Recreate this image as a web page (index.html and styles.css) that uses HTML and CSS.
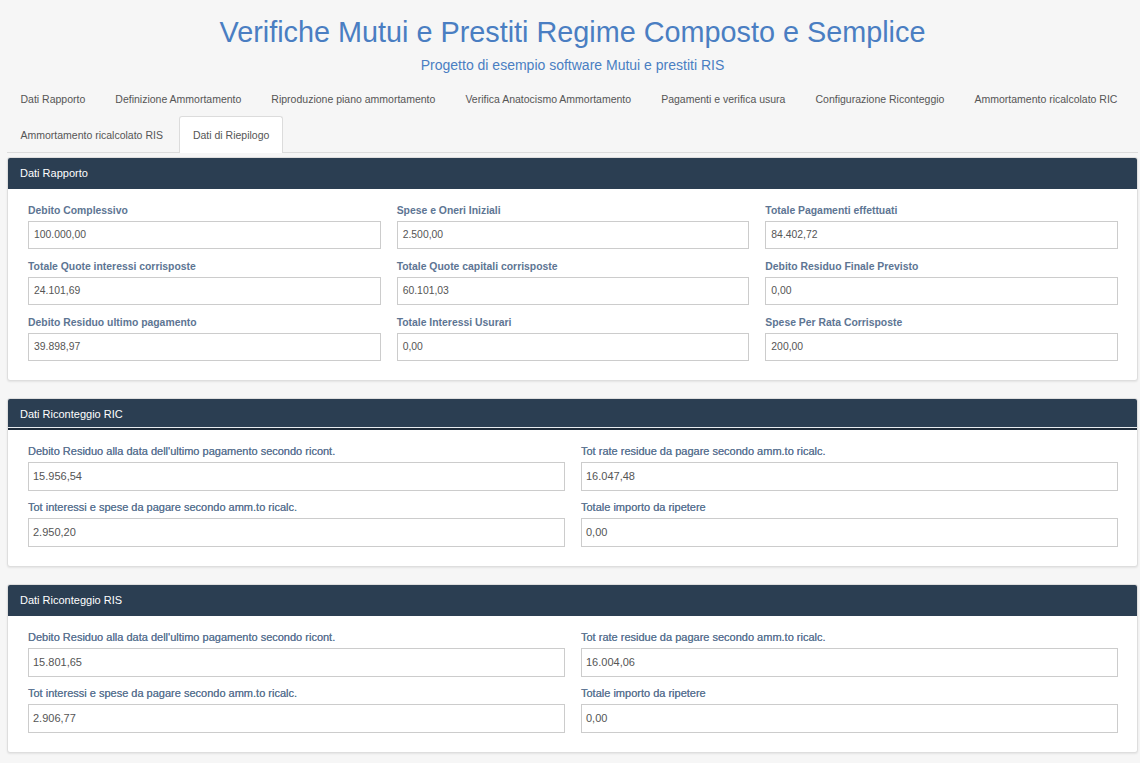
FILE: index.html
```html
<!DOCTYPE html>
<html lang="it">
<head>
<meta charset="utf-8">
<title>Verifiche Mutui e Prestiti</title>
<link rel="stylesheet" href="styles.css">
</head>
<body>
<div class="page">
  <header class="top">
    <h1 class="title">Verifiche Mutui e Prestiti Regime Composto e Semplice</h1>
    <p class="subtitle">Progetto di esempio software Mutui e prestiti RIS</p>
  </header>

  <ul class="tabs">
    <li class="tab">Dati Rapporto</li>
    <li class="tab">Definizione Ammortamento</li>
    <li class="tab">Riproduzione piano ammortamento</li>
    <li class="tab">Verifica Anatocismo Ammortamento</li>
    <li class="tab">Pagamenti e verifica usura</li>
    <li class="tab">Configurazione Riconteggio</li>
    <li class="tab">Ammortamento ricalcolato RIC</li>
    <li class="tab">Ammortamento ricalcolato RIS</li>
    <li class="tab active">Dati di Riepilogo</li>
  </ul>

  <section class="panel">
    <div class="panel-head">Dati Rapporto</div>
    <div class="panel-body cols-3">
      <div class="field"><label>Debito Complessivo</label><div class="input">100.000,00</div></div>
      <div class="field"><label>Spese e Oneri Iniziali</label><div class="input">2.500,00</div></div>
      <div class="field"><label>Totale Pagamenti effettuati</label><div class="input">84.402,72</div></div>
      <div class="field"><label>Totale Quote interessi corrisposte</label><div class="input">24.101,69</div></div>
      <div class="field"><label>Totale Quote capitali corrisposte</label><div class="input">60.101,03</div></div>
      <div class="field"><label>Debito Residuo Finale Previsto</label><div class="input">0,00</div></div>
      <div class="field"><label>Debito Residuo ultimo pagamento</label><div class="input">39.898,97</div></div>
      <div class="field"><label>Totale Interessi Usurari</label><div class="input">0,00</div></div>
      <div class="field"><label>Spese Per Rata Corrisposte</label><div class="input">200,00</div></div>
    </div>
  </section>

  <section class="panel">
    <div class="panel-head underlined">Dati Riconteggio RIC</div>
    <div class="panel-body cols-2">
      <div class="field"><label>Debito Residuo alla data dell'ultimo pagamento secondo ricont.</label><div class="input">15.956,54</div></div>
      <div class="field"><label>Tot rate residue da pagare secondo amm.to ricalc.</label><div class="input">16.047,48</div></div>
      <div class="field"><label>Tot interessi e spese da pagare secondo amm.to ricalc.</label><div class="input">2.950,20</div></div>
      <div class="field"><label>Totale importo da ripetere</label><div class="input">0,00</div></div>
    </div>
  </section>

  <section class="panel">
    <div class="panel-head">Dati Riconteggio RIS</div>
    <div class="panel-body cols-2">
      <div class="field"><label>Debito Residuo alla data dell'ultimo pagamento secondo ricont.</label><div class="input">15.801,65</div></div>
      <div class="field"><label>Tot rate residue da pagare secondo amm.to ricalc.</label><div class="input">16.004,06</div></div>
      <div class="field"><label>Tot interessi e spese da pagare secondo amm.to ricalc.</label><div class="input">2.906,77</div></div>
      <div class="field"><label>Totale importo da ripetere</label><div class="input">0,00</div></div>
    </div>
  </section>
</div>
</body>
</html>
```

FILE: styles.css
```css
* { box-sizing: border-box; }

html, body {
  margin: 0;
  padding: 0;
  background: #f6f6f6;
  font-family: "Liberation Sans", Arial, sans-serif;
}

.page {
  padding: 0 2px 0 7px;
}

.top {
  text-align: center;
  padding-top: 14px;
}

.title {
  margin: 0;
  font-size: 28.8px;
  font-weight: normal;
  line-height: 36px;
  color: #4a7ec2;
}

.subtitle {
  margin: 6px 0 0;
  font-size: 14px;
  line-height: 18px;
  color: #4a7ec2;
}

.tabs {
  list-style: none;
  margin: 6px 0 0;
  padding: 0;
  display: flex;
  flex-wrap: wrap;
  border-bottom: 1px solid #dcdcdc;
}

.tab {
  height: 36px;
  line-height: 36px;
  padding: 0 12.5px;
  margin-right: 3px;
  font-size: 10.5px;
  color: #555;
  border: 1px solid transparent;
  border-bottom: 0;
  border-radius: 3px 3px 0 0;
  white-space: nowrap;
}

.tab.active {
  background: #fff;
  border-color: #dcdcdc;
  margin-bottom: -1px;
  height: 37px;
  color: #555;
}

.panel {
  margin-top: 4px;
  margin-bottom: 17px;
  background: #fff;
  border: 1px solid #dedede;
  border-radius: 3px;
  box-shadow: 0 1px 2px rgba(0, 0, 0, 0.08);
  overflow: hidden;
}

.panel + .panel {
  margin-top: 0;
}

.panel-head {
  height: 31px;
  line-height: 31px;
  padding: 0 12px;
  background: #2b3e52;
  color: #fff;
  font-size: 11px;
}

.panel-head.underlined {
  box-shadow: inset 0 -2px 0 #1f2c3a, inset 0 -3px 0 #e8ecf0;
}

.panel-body {
  display: grid;
  column-gap: 16px;
  row-gap: 11px;
  padding: 15px 19px 19px 20px;
}

.cols-3 { grid-template-columns: repeat(3, 1fr); }
.cols-2 { grid-template-columns: repeat(2, 1fr); row-gap: 10px; }

.field label {
  display: block;
  font-size: 10.4px;
  line-height: 13px;
  font-weight: bold;
  color: #5d7593;
  margin-bottom: 4px;
}

.cols-2 .field label {
  font-size: 11px;
  font-weight: normal;
  color: #5d7593;
  text-shadow: 0 0 0.3px #5d7593;
}

.input {
  height: 28px;
  line-height: 26px;
  border: 1px solid #cccccc;
  padding: 0 5px;
  font-size: 10.4px;
  color: #555;
  background: #fff;
}

.cols-2 .input {
  font-size: 11px;
  padding: 0 4px;
  height: 29px;
  line-height: 27px;
}
```
